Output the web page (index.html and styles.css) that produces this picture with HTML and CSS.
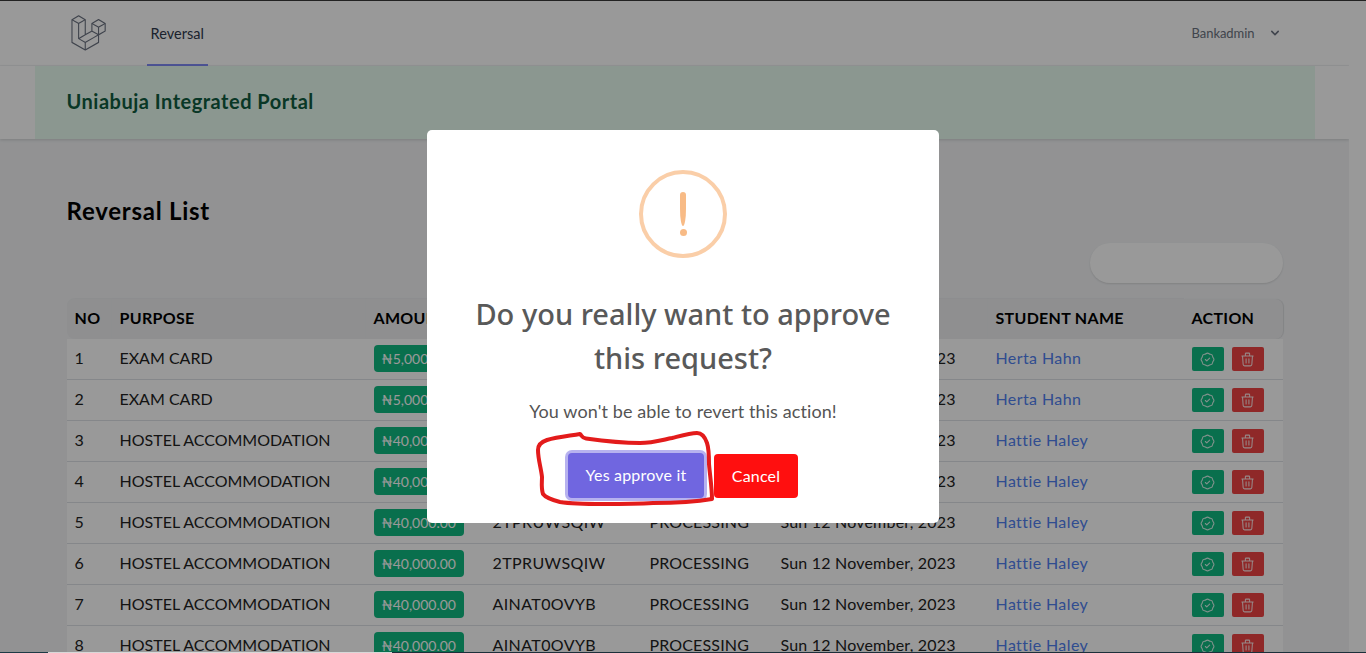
FILE: index.html
```html
<!DOCTYPE html>
<html lang="en">
<head>
<meta charset="utf-8">
<title>Reversal List</title>
<link rel="stylesheet" href="styles.css">
</head>
<body>
<div class="page">
  <nav class="nav">
    <div class="wrap nav-inner">
      <div class="nav-left">
        <svg class="logo" viewBox="0 0 316 316"><path d="M305.8 81.125C305.77 80.995 305.69 80.885 305.65 80.755C305.56 80.525 305.49 80.285 305.37 80.075C305.29 79.935 305.17 79.815 305.07 79.685C304.94 79.515 304.83 79.325 304.68 79.175C304.55 79.045 304.39 78.955 304.25 78.845C304.09 78.715 303.95 78.575 303.77 78.475L251.32 48.275C249.97 47.495 248.31 47.495 246.96 48.275L194.51 78.475C194.33 78.575 194.19 78.725 194.03 78.845C193.89 78.955 193.73 79.045 193.6 79.175C193.45 79.325 193.34 79.515 193.21 79.685C193.11 79.815 192.99 79.935 192.91 80.075C192.79 80.285 192.71 80.525 192.63 80.755C192.58 80.875 192.51 80.995 192.48 81.125C192.38 81.495 192.33 81.875 192.33 82.265V139.625L148.62 164.795V52.575C148.62 52.185 148.57 51.805 148.47 51.435C148.44 51.305 148.36 51.195 148.32 51.065C148.23 50.835 148.16 50.595 148.04 50.385C147.96 50.245 147.84 50.125 147.74 49.995C147.61 49.825 147.5 49.635 147.35 49.485C147.22 49.355 147.06 49.265 146.92 49.155C146.76 49.025 146.62 48.885 146.44 48.785L93.99 18.585C92.64 17.805 90.98 17.805 89.63 18.585L37.18 48.785C37 48.885 36.86 49.035 36.7 49.155C36.56 49.265 36.4 49.355 36.27 49.485C36.12 49.635 36.01 49.825 35.88 49.995C35.78 50.125 35.66 50.245 35.58 50.385C35.46 50.595 35.38 50.835 35.3 51.065C35.25 51.185 35.18 51.305 35.15 51.435C35.05 51.805 35 52.185 35 52.575V232.235C35 233.795 35.84 235.245 37.19 236.025L142.1 296.425C142.33 296.555 142.58 296.635 142.83 296.725C142.95 296.765 143.06 296.835 143.18 296.865C143.55 296.965 143.93 297.015 144.31 297.015C144.69 297.015 145.07 296.965 145.44 296.865C145.55 296.835 145.65 296.775 145.76 296.735C146.02 296.645 146.28 296.565 146.52 296.425L251.43 236.025C252.78 235.245 253.62 233.795 253.62 232.235V174.875L303.8 145.985C305.16 145.205 305.99 143.755 305.99 142.195V82.265C305.99 81.875 305.94 81.495 305.84 81.125H305.8ZM144.2 227.205L100.57 202.515L146.39 176.135L196.66 147.195L240.33 172.335L208.29 190.625L144.2 227.205ZM244.75 114.995V164.795L226.39 154.225L201.03 139.625V89.825L219.39 100.395L244.75 114.995ZM249.12 57.105L292.81 82.265L249.12 107.425L205.43 82.265L249.12 57.105ZM114.49 184.425L96.13 194.995V85.305L121.49 70.705L139.85 60.135V169.815L114.49 184.425ZM91.76 27.425L135.45 52.585L91.76 77.745L48.07 52.585L91.76 27.425ZM43.67 60.135L62.03 70.705L87.39 85.305V202.545V202.555V202.565C87.39 202.735 87.44 202.895 87.46 203.055C87.49 203.265 87.49 203.485 87.55 203.695V203.705C87.6 203.875 87.69 204.035 87.76 204.195C87.84 204.375 87.89 204.575 87.99 204.745C87.99 204.745 87.99 204.755 88 204.755C88.09 204.905 88.22 205.035 88.33 205.175C88.45 205.335 88.55 205.495 88.69 205.635L88.7 205.645C88.82 205.765 88.98 205.855 89.12 205.965C89.28 206.085 89.42 206.225 89.59 206.325C89.6 206.325 89.6 206.325 89.61 206.335C89.62 206.335 89.62 206.345 89.63 206.345L139.87 234.775V285.065L43.67 229.705V60.135ZM244.75 229.705L148.58 285.075V234.775L219.8 194.115L244.75 179.875V229.705ZM297.2 139.625L253.49 164.795V114.995L278.85 100.395L297.21 89.825V139.625H297.2Z"/></svg>
        <a class="nav-link">Reversal</a>
      </div>
      <div class="user">Bankadmin
        <svg class="chevron" viewBox="0 0 20 20"><path d="M5.293 7.293a1 1 0 011.414 0L10 10.586l3.293-3.293a1 1 0 111.414 1.414l-4 4a1 1 0 01-1.414 0l-4-4a1 1 0 010-1.414z"/></svg>
      </div>
    </div>
  </nav>

  <header class="banner">
    <div class="banner-alert">Uniabuja Integrated Portal</div>
  </header>

  <main class="wrap main">
    <h1 class="title">Reversal List</h1>
    <div class="search-row"><div class="search"></div></div>
    <table class="table">
      <colgroup>
        <col class="c-no"><col class="c-purpose"><col class="c-amount"><col class="c-ref"><col class="c-status"><col class="c-date"><col class="c-student"><col class="c-action">
      </colgroup>
      <thead>
        <tr><th>NO</th><th>PURPOSE</th><th>AMOUNT</th><th>REFERENCE</th><th>STATUS</th><th>DATE</th><th>STUDENT NAME</th><th>ACTION</th></tr>
      </thead>
      <tbody>
        <tr><td>1</td><td>EXAM CARD</td><td><span class="badge">₦5,000.00</span></td><td>1TPRUWSQIW</td><td>PROCESSING</td><td>Sun 12 November, 2023</td><td><a class="link">Herta Hahn</a></td><td><div class="actions"><button class="act ok"><svg viewBox="0 0 24 24"><path d="M9 12l2 2 4-4M7.835 4.697a3.42 3.42 0 001.946-.806 3.42 3.42 0 014.438 0 3.42 3.42 0 001.946.806 3.42 3.42 0 013.138 3.138 3.42 3.42 0 00.806 1.946 3.42 3.42 0 010 4.438 3.42 3.42 0 00-.806 1.946 3.42 3.42 0 01-3.138 3.138 3.42 3.42 0 00-1.946.806 3.42 3.42 0 01-4.438 0 3.42 3.42 0 00-1.946-.806 3.42 3.42 0 01-3.138-3.138 3.42 3.42 0 00-.806-1.946 3.42 3.42 0 010-4.438 3.42 3.42 0 00.806-1.946 3.42 3.42 0 013.138-3.138z"/></svg></button><button class="act del"><svg viewBox="0 0 24 24"><path d="M19 7l-.867 12.142A2 2 0 0116.138 21H7.862a2 2 0 01-1.995-1.858L5 7m5 4v6m4-6v6m1-10V4a1 1 0 00-1-1h-4a1 1 0 00-1 1v3M4 7h16"/></svg></button></div></td></tr>
        <tr><td>2</td><td>EXAM CARD</td><td><span class="badge">₦5,000.00</span></td><td>1TPRUWSQIW</td><td>PROCESSING</td><td>Sun 12 November, 2023</td><td><a class="link">Herta Hahn</a></td><td><div class="actions"><button class="act ok"><svg viewBox="0 0 24 24"><path d="M9 12l2 2 4-4M7.835 4.697a3.42 3.42 0 001.946-.806 3.42 3.42 0 014.438 0 3.42 3.42 0 001.946.806 3.42 3.42 0 013.138 3.138 3.42 3.42 0 00.806 1.946 3.42 3.42 0 010 4.438 3.42 3.42 0 00-.806 1.946 3.42 3.42 0 01-3.138 3.138 3.42 3.42 0 00-1.946.806 3.42 3.42 0 01-4.438 0 3.42 3.42 0 00-1.946-.806 3.42 3.42 0 01-3.138-3.138 3.42 3.42 0 00-.806-1.946 3.42 3.42 0 010-4.438 3.42 3.42 0 00.806-1.946 3.42 3.42 0 013.138-3.138z"/></svg></button><button class="act del"><svg viewBox="0 0 24 24"><path d="M19 7l-.867 12.142A2 2 0 0116.138 21H7.862a2 2 0 01-1.995-1.858L5 7m5 4v6m4-6v6m1-10V4a1 1 0 00-1-1h-4a1 1 0 00-1 1v3M4 7h16"/></svg></button></div></td></tr>
        <tr><td>3</td><td>HOSTEL ACCOMMODATION</td><td><span class="badge">₦40,000.00</span></td><td>2TPRUWSQIW</td><td>PROCESSING</td><td>Sun 12 November, 2023</td><td><a class="link">Hattie Haley</a></td><td><div class="actions"><button class="act ok"><svg viewBox="0 0 24 24"><path d="M9 12l2 2 4-4M7.835 4.697a3.42 3.42 0 001.946-.806 3.42 3.42 0 014.438 0 3.42 3.42 0 001.946.806 3.42 3.42 0 013.138 3.138 3.42 3.42 0 00.806 1.946 3.42 3.42 0 010 4.438 3.42 3.42 0 00-.806 1.946 3.42 3.42 0 01-3.138 3.138 3.42 3.42 0 00-1.946.806 3.42 3.42 0 01-4.438 0 3.42 3.42 0 00-1.946-.806 3.42 3.42 0 01-3.138-3.138 3.42 3.42 0 00-.806-1.946 3.42 3.42 0 010-4.438 3.42 3.42 0 00.806-1.946 3.42 3.42 0 013.138-3.138z"/></svg></button><button class="act del"><svg viewBox="0 0 24 24"><path d="M19 7l-.867 12.142A2 2 0 0116.138 21H7.862a2 2 0 01-1.995-1.858L5 7m5 4v6m4-6v6m1-10V4a1 1 0 00-1-1h-4a1 1 0 00-1 1v3M4 7h16"/></svg></button></div></td></tr>
        <tr><td>4</td><td>HOSTEL ACCOMMODATION</td><td><span class="badge">₦40,000.00</span></td><td>2TPRUWSQIW</td><td>PROCESSING</td><td>Sun 12 November, 2023</td><td><a class="link">Hattie Haley</a></td><td><div class="actions"><button class="act ok"><svg viewBox="0 0 24 24"><path d="M9 12l2 2 4-4M7.835 4.697a3.42 3.42 0 001.946-.806 3.42 3.42 0 014.438 0 3.42 3.42 0 001.946.806 3.42 3.42 0 013.138 3.138 3.42 3.42 0 00.806 1.946 3.42 3.42 0 010 4.438 3.42 3.42 0 00-.806 1.946 3.42 3.42 0 01-3.138 3.138 3.42 3.42 0 00-1.946.806 3.42 3.42 0 01-4.438 0 3.42 3.42 0 00-1.946-.806 3.42 3.42 0 01-3.138-3.138 3.42 3.42 0 00-.806-1.946 3.42 3.42 0 010-4.438 3.42 3.42 0 00.806-1.946 3.42 3.42 0 013.138-3.138z"/></svg></button><button class="act del"><svg viewBox="0 0 24 24"><path d="M19 7l-.867 12.142A2 2 0 0116.138 21H7.862a2 2 0 01-1.995-1.858L5 7m5 4v6m4-6v6m1-10V4a1 1 0 00-1-1h-4a1 1 0 00-1 1v3M4 7h16"/></svg></button></div></td></tr>
        <tr><td>5</td><td>HOSTEL ACCOMMODATION</td><td><span class="badge">₦40,000.00</span></td><td>2TPRUWSQIW</td><td>PROCESSING</td><td>Sun 12 November, 2023</td><td><a class="link">Hattie Haley</a></td><td><div class="actions"><button class="act ok"><svg viewBox="0 0 24 24"><path d="M9 12l2 2 4-4M7.835 4.697a3.42 3.42 0 001.946-.806 3.42 3.42 0 014.438 0 3.42 3.42 0 001.946.806 3.42 3.42 0 013.138 3.138 3.42 3.42 0 00.806 1.946 3.42 3.42 0 010 4.438 3.42 3.42 0 00-.806 1.946 3.42 3.42 0 01-3.138 3.138 3.42 3.42 0 00-1.946.806 3.42 3.42 0 01-4.438 0 3.42 3.42 0 00-1.946-.806 3.42 3.42 0 01-3.138-3.138 3.42 3.42 0 00-.806-1.946 3.42 3.42 0 010-4.438 3.42 3.42 0 00.806-1.946 3.42 3.42 0 013.138-3.138z"/></svg></button><button class="act del"><svg viewBox="0 0 24 24"><path d="M19 7l-.867 12.142A2 2 0 0116.138 21H7.862a2 2 0 01-1.995-1.858L5 7m5 4v6m4-6v6m1-10V4a1 1 0 00-1-1h-4a1 1 0 00-1 1v3M4 7h16"/></svg></button></div></td></tr>
        <tr><td>6</td><td>HOSTEL ACCOMMODATION</td><td><span class="badge">₦40,000.00</span></td><td>2TPRUWSQIW</td><td>PROCESSING</td><td>Sun 12 November, 2023</td><td><a class="link">Hattie Haley</a></td><td><div class="actions"><button class="act ok"><svg viewBox="0 0 24 24"><path d="M9 12l2 2 4-4M7.835 4.697a3.42 3.42 0 001.946-.806 3.42 3.42 0 014.438 0 3.42 3.42 0 001.946.806 3.42 3.42 0 013.138 3.138 3.42 3.42 0 00.806 1.946 3.42 3.42 0 010 4.438 3.42 3.42 0 00-.806 1.946 3.42 3.42 0 01-3.138 3.138 3.42 3.42 0 00-1.946.806 3.42 3.42 0 01-4.438 0 3.42 3.42 0 00-1.946-.806 3.42 3.42 0 01-3.138-3.138 3.42 3.42 0 00-.806-1.946 3.42 3.42 0 010-4.438 3.42 3.42 0 00.806-1.946 3.42 3.42 0 013.138-3.138z"/></svg></button><button class="act del"><svg viewBox="0 0 24 24"><path d="M19 7l-.867 12.142A2 2 0 0116.138 21H7.862a2 2 0 01-1.995-1.858L5 7m5 4v6m4-6v6m1-10V4a1 1 0 00-1-1h-4a1 1 0 00-1 1v3M4 7h16"/></svg></button></div></td></tr>
        <tr><td>7</td><td>HOSTEL ACCOMMODATION</td><td><span class="badge">₦40,000.00</span></td><td>AINAT0OVYB</td><td>PROCESSING</td><td>Sun 12 November, 2023</td><td><a class="link">Hattie Haley</a></td><td><div class="actions"><button class="act ok"><svg viewBox="0 0 24 24"><path d="M9 12l2 2 4-4M7.835 4.697a3.42 3.42 0 001.946-.806 3.42 3.42 0 014.438 0 3.42 3.42 0 001.946.806 3.42 3.42 0 013.138 3.138 3.42 3.42 0 00.806 1.946 3.42 3.42 0 010 4.438 3.42 3.42 0 00-.806 1.946 3.42 3.42 0 01-3.138 3.138 3.42 3.42 0 00-1.946.806 3.42 3.42 0 01-4.438 0 3.42 3.42 0 00-1.946-.806 3.42 3.42 0 01-3.138-3.138 3.42 3.42 0 00-.806-1.946 3.42 3.42 0 010-4.438 3.42 3.42 0 00.806-1.946 3.42 3.42 0 013.138-3.138z"/></svg></button><button class="act del"><svg viewBox="0 0 24 24"><path d="M19 7l-.867 12.142A2 2 0 0116.138 21H7.862a2 2 0 01-1.995-1.858L5 7m5 4v6m4-6v6m1-10V4a1 1 0 00-1-1h-4a1 1 0 00-1 1v3M4 7h16"/></svg></button></div></td></tr>
        <tr><td>8</td><td>HOSTEL ACCOMMODATION</td><td><span class="badge">₦40,000.00</span></td><td>AINAT0OVYB</td><td>PROCESSING</td><td>Sun 12 November, 2023</td><td><a class="link">Hattie Haley</a></td><td><div class="actions"><button class="act ok"><svg viewBox="0 0 24 24"><path d="M9 12l2 2 4-4M7.835 4.697a3.42 3.42 0 001.946-.806 3.42 3.42 0 014.438 0 3.42 3.42 0 001.946.806 3.42 3.42 0 013.138 3.138 3.42 3.42 0 00.806 1.946 3.42 3.42 0 010 4.438 3.42 3.42 0 00-.806 1.946 3.42 3.42 0 01-3.138 3.138 3.42 3.42 0 00-1.946.806 3.42 3.42 0 01-4.438 0 3.42 3.42 0 00-1.946-.806 3.42 3.42 0 01-3.138-3.138 3.42 3.42 0 00-.806-1.946 3.42 3.42 0 010-4.438 3.42 3.42 0 00.806-1.946 3.42 3.42 0 013.138-3.138z"/></svg></button><button class="act del"><svg viewBox="0 0 24 24"><path d="M19 7l-.867 12.142A2 2 0 0116.138 21H7.862a2 2 0 01-1.995-1.858L5 7m5 4v6m4-6v6m1-10V4a1 1 0 00-1-1h-4a1 1 0 00-1 1v3M4 7h16"/></svg></button></div></td></tr>
      </tbody>
    </table>
  </main>
</div>

<div class="overlay">
  <div class="modal">
    <div class="warn-icon"><span class="warn-bar"></span><span class="warn-dot"></span></div>
    <h2 class="modal-title">Do you really want to approve this request?</h2>
    <p class="modal-text">You won't be able to revert this action!</p>
    <div class="modal-actions">
      <button class="btn btn-yes">Yes approve it</button>
      <button class="btn btn-cancel">Cancel</button>
    </div>
  </div>
  <svg class="scribble" viewBox="0 0 1366 653"><path d="M580 434C582 436 582 438 586 438.500C604 441 622 443 640 443C652 443 662 440 672 438C680 436 690 433 697 433C702 433 705 437 707 443C709 449 709 456 709 464C710 476 712 488 712 499C695 502 674 503 653 503C636 504 620 504 603 504C588 504 573 504 560 502C552 500 546 498 543 494C541 488 542 482 542 477C541 468 538 459 538 450C538 445 541 442 547 440C557 437 568 436 580 434Z"/></svg>
</div>
<div class="edge-top"></div>
<div class="edge-bottom"><span class="edge-a"></span><span class="edge-b"></span><span class="edge-c"></span></div>
</body>
</html>
```

FILE: styles.css
```css
* { box-sizing: border-box; }
html, body { margin: 0; height: 100%; overflow: hidden; background: #fff; }
body { font-family: "Lato", "Noto Sans", sans-serif; color: #111; font-size: 16px; }

.page { width: 1349px; height: 653px; overflow: hidden; background: #f3f4f6; }
.wrap { width: 1280px; margin: 0 auto; padding: 0 32px; }

.nav { background: #fff; height: 66px; border-bottom: 1px solid #f3f4f6; }
.nav-inner { height: 65px; display: flex; justify-content: space-between; align-items: stretch; }
.nav-left { display: flex; align-items: center; gap: 40px; }
.logo { width: 40px; height: 40px; fill: #6b7280; }
.nav-link { height: 65px; padding: 25px 4px 0; margin-top: 1px; font-size: 14.5px; line-height: 16px; letter-spacing: .05px; color: #2f3a4d; border-bottom: 2px solid #818cf8; }
.user { display: flex; align-items: center; gap: 12px; font-size: 13px; letter-spacing: -.05px; color: #6b7280; height: 65px; }
.chevron { width: 16px; height: 16px; fill: #6b7280; }

.banner { background: #fff; height: 73px; box-shadow: 0 1px 3px rgba(0,0,0,.15); position: relative; }
.banner-alert { width: 1280px; height: 73px; margin: 0 auto; padding: 0 32px 3px; display: flex; align-items: center; background: #e8fcf0; color: #0f5c40; font-size: 20px; font-weight: 700; letter-spacing: .5px; }

.main { padding-top: 56px; }
.title { margin: 0; font-size: 24px; font-weight: 700; line-height: 32px; letter-spacing: .75px; color: #000; }
.search-row { display: flex; justify-content: flex-end; margin-top: 16px; }
.search { width: 193px; height: 40px; border-radius: 20px; background: #fff; box-shadow: 0 1px 2px rgba(0,0,0,.12); }

.table { width: 100%; margin-top: 16px; border-collapse: separate; border-spacing: 0; table-layout: fixed; font-size: 16px; }
.c-no { width: 45px; } .c-purpose { width: 254px; } .c-amount { width: 119px; } .c-ref { width: 157px; }
.c-status { width: 131px; } .c-date { width: 215px; } .c-student { width: 196px; } .c-action { width: 99px; }
.table th { height: 40px; padding: 0 8px 3px; text-align: left; font-weight: 700; letter-spacing: .3px; color: #000; background: #eeeff1; white-space: nowrap; box-shadow: 0 -1px 1px rgba(0,0,0,.03); }
.table th:first-child { border-top-left-radius: 8px; border-bottom-left-radius: 8px; }
.table th:last-child { border-top-right-radius: 8px; border-bottom-right-radius: 8px; box-shadow: 1px 0 1px rgba(0,0,0,.1); }
.table td { height: 41px; padding: 0 8px 3px; background: #fff; border-bottom: 1px solid #dee2e6; white-space: nowrap; color: #222; }
.table td:nth-child(4) { letter-spacing: .4px; }
.table td:nth-child(5) { letter-spacing: .15px; }
.table td:nth-child(6) { letter-spacing: .2px; }
.badge { display: inline-block; height: 27px; line-height: 27px; margin-top: 2px; padding: 0 8px; border-radius: 4px; background: #10b981; color: #fff; font-size: 14px; letter-spacing: 0; }
.link { color: #5080f0; letter-spacing: .4px; }
.actions { display: flex; gap: 8px; margin-top: 3px; }
.act { width: 32px; height: 24px; padding: 0; border: 0; border-radius: 2px; display: flex; align-items: center; justify-content: center; }
.act svg { width: 17px; height: 17px; fill: none; stroke: #fff; stroke-width: 1.5; stroke-linecap: round; stroke-linejoin: round; opacity: .85; }
.ok { background: #10b981; }
.del { background: #ef4444; }

.overlay { position: fixed; inset: 0; background: rgba(0,0,0,.4); display: flex; align-items: center; justify-content: center; }
.modal { width: 512px; height: 393px; padding-top: 40px; background: #fff; border-radius: 5px; display: flex; flex-direction: column; align-items: center; }
.warn-icon { width: 88px; height: 88px; flex: none; border: 4px solid #facea8; border-radius: 50%; display: flex; flex-direction: column; align-items: center; justify-content: center; gap: 3px; }
.warn-bar { width: 6px; height: 34px; border-radius: 3px 3px 50% 50%; background: #f8bb86; }
.warn-dot { width: 7px; height: 7px; border-radius: 50%; background: #f8bb86; }
.modal-title { margin: 34px 0 0; width: 440px; font-family: "Noto Sans", "Lato", sans-serif; font-size: 29px; line-height: 44px; font-weight: 500; color: #595959; text-align: center; }
.modal-text { margin: 18px 0 0; font-size: 18px; line-height: 27px; letter-spacing: .1px; color: #545454; text-align: center; }
.modal-actions { display: flex; gap: 10px; margin-top: 28px; align-items: flex-start; }
.btn { height: 45px; padding: 0 0 2px; border: 0; border-radius: 4px; font: inherit; letter-spacing: .2px; color: #fff; }
.btn-yes { width: 136px; background: #7066e0; box-shadow: 0 0 0 3px rgba(112,102,224,.5); }
.btn-cancel { width: 84px; background: #ff0f0f; margin-top: 1px; height: 44px; }
.scribble { position: absolute; left: 0; top: 0; width: 1366px; height: 653px; fill: none; stroke: #e31b1b; stroke-width: 4; stroke-linejoin: round; pointer-events: none; }

.edge-top { position: fixed; left: 0; right: 0; top: 0; height: 1px; background: #222; }
.edge-bottom { position: fixed; left: 0; right: 0; bottom: 0; height: 1px; display: flex; }
.edge-a { width: 48px; background: #1d3a45; }
.edge-b { width: 344px; background: #d8d8d8; }
.edge-c { flex: 1; background: #1c2f3a; }
```
